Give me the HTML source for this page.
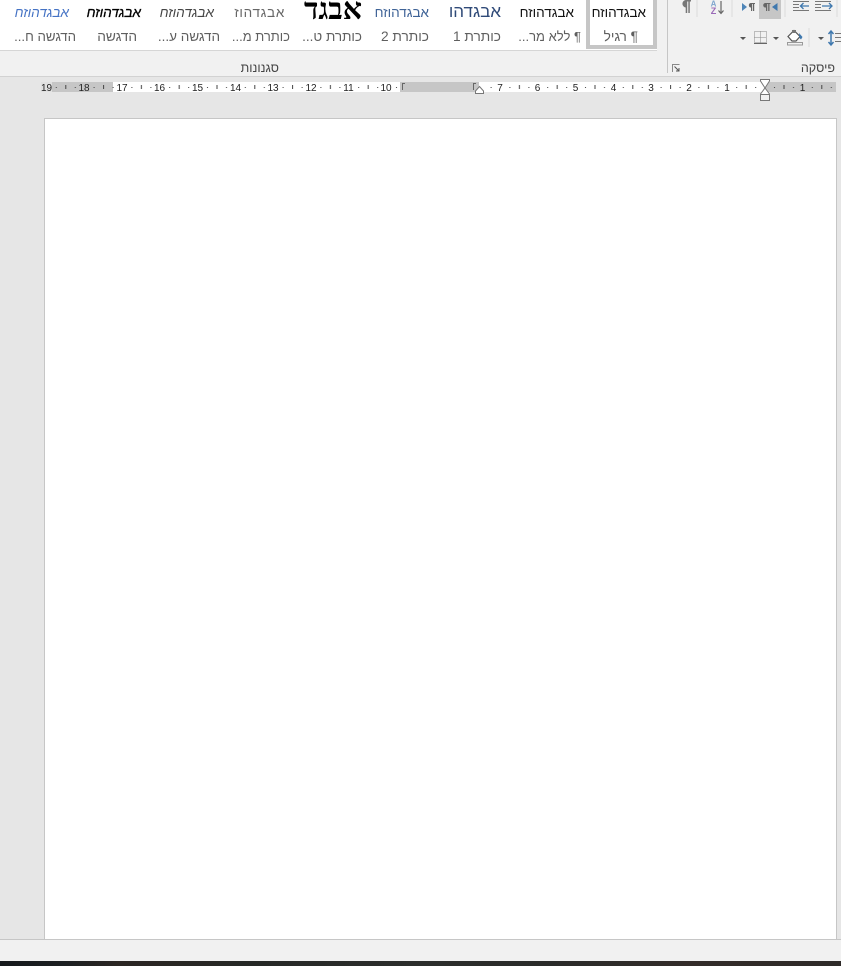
<!DOCTYPE html>
<html lang="he">
<head>
<meta charset="utf-8">
<title>Word</title>
<style>
html,body{margin:0;padding:0;width:841px;height:966px;overflow:hidden;background:#e6e6e6;font-family:"Liberation Sans",sans-serif}
#a{position:absolute;left:0;top:0;width:841px;height:966px;overflow:hidden}
.b{position:absolute}
.s,.l{position:absolute;white-space:nowrap;direction:rtl;line-height:18px}
.s{top:4px;font-size:13.5px;color:#111}
.l{top:28px;font-size:13.5px;color:#5f5f5f}
.w{font-size:13.7px}
svg{position:absolute;overflow:visible}
</style>
</head>
<body>
<div id="a">
<div class="b" style="left:0;top:0;width:841px;height:77px;background:#f1f1f1"></div>
<div class="b" style="left:0;top:0;width:657px;height:50px;background:#fff"></div>
<div class="b" style="left:0;top:50px;width:657px;height:1px;background:#d6d6d6"></div>
<div class="b" style="left:0;top:76px;width:841px;height:1px;background:#d2d2d2"></div>
<div class="b" style="left:667px;top:0;width:1px;height:73px;background:#c6c6c6"></div>
<div class="b" style="left:586px;top:-4px;width:63px;height:45px;border:4px solid #c6c6c6;background:#fff"></div>

<span class="s" style="right:195px">אבגדהוזח</span>
<span class="l w" style="right:203px">¶ רגיל</span>
<span class="s" style="right:267px">אבגדהוזח</span>
<span class="l" style="right:260px;font-size:13px">¶ ללא מר...</span>
<span class="s" style="right:340px;top:3px;font-size:17px;color:#2f4a78">אבגדהו</span>
<span class="l w" style="right:340px">כותרת 1</span>
<span class="s" style="right:412px;font-size:13.5px;color:#3f6397">אבגדהוזח</span>
<span class="l w" style="right:412px">כותרת 2</span>
<span class="s" style="right:479px;top:-8px;font-family:'Liberation Serif',serif;font-size:30px;font-weight:bold;line-height:36px;color:#000">אבגד</span>
<span class="l" style="right:479px">כותרת ט...</span>
<span class="s" style="right:556px;letter-spacing:.7px;color:#666">אבגדהוז</span>
<span class="l" style="right:551px;font-size:13px">כותרת מ...</span>
<span class="s" style="right:627px;font-style:italic;color:#444">אבגדהוזח</span>
<span class="l" style="right:621px">הדגשה ע...</span>
<span class="s" style="right:700px;font-style:italic;color:#000;-webkit-text-stroke:.3px #000">אבגדהוזח</span>
<span class="l w" style="right:704px">הדגשה</span>
<span class="s" style="right:772px;font-style:italic;color:#4472c4">אבגדהוזח</span>
<span class="l" style="right:765px;font-size:13.25px">הדגשה ח...</span>

<span class="l" style="right:562px;top:59px;font-size:12.5px;color:#444">סגנונות</span>
<span class="l" style="right:6px;top:59px;font-size:12.5px;color:#444">פיסקה</span>

<div class="b" style="left:759px;top:0;width:22px;height:19px;background:#c6c6c6"></div>

<svg style="left:0;top:0" width="841" height="80" viewBox="0 0 841 80" fill="none">
<!-- pilcrow -->
<path d="M685.500 0H691V1.500H689.800V13H688.300V1.500H687.200V13H685.700V7.500A3.800 3.800 0 0 1 685.500 0z" fill="#777"/>
<line x1="697" y1="0" x2="697" y2="17" stroke="#dcdcdc"/>
<!-- sort -->
<text x="713.500" y="6.500" font-family="Liberation Sans" font-size="8" font-weight="bold" fill="#7fa6cf" text-anchor="middle">A</text>
<text x="713.500" y="14" font-family="Liberation Sans" font-size="9" font-weight="bold" fill="#9a6ab8" text-anchor="middle">Z</text>
<path d="M721 1V13M718.500 10.500L721 13.500L723.500 10.500" stroke="#666" stroke-width="1.200"/>
<line x1="732" y1="0" x2="732" y2="17" stroke="#dcdcdc"/>
<!-- ltr -->
<path d="M742 3L747 7L742 11z" fill="#4f86b8"/>
<path d="M750.500 3H755V4H754.200V11H753V4H752.200V11H751V7.500A2.300 2.300 0 0 1 750.500 3z" fill="#666"/>
<!-- rtl -->
<path d="M765 3H770.500V4H769.500V11H768.200V4H767.200V11H766V7.500A2.300 2.300 0 0 1 765 3z" fill="#666"/>
<path d="M777.500 3L772 7L777.500 11z" fill="#3f78ae"/>
<line x1="785" y1="0" x2="785" y2="17" stroke="#dcdcdc"/>
<!-- indents -->
<path d="M793 1.500H809M793 4.500H799M793 7.500H799M793 10.500H809" stroke="#777"/>
<path d="M800 6H809M803.500 3L800.500 6L803.500 9" stroke="#3f78ae" stroke-width="1.300"/>
<path d="M815 1.500H831M815 4.500H821M815 7.500H821M815 10.500H831" stroke="#777"/>
<path d="M822 6H832M829 3L832 6L829 9" stroke="#3f78ae" stroke-width="1.300"/>
<line x1="837" y1="0" x2="837" y2="17" stroke="#dcdcdc"/>
<!-- row 2 -->
<path d="M740 37H746L743 40z" fill="#555"/>
<path d="M754.500 31.500H766.500V42.500H754.500ZM760.500 31.500V42.500M754.500 37.500H766.500" stroke="#888" stroke-dasharray="1 1"/>
<path d="M754 43.500H767" stroke="#666"/>
<path d="M773 37H779L776 40z" fill="#555"/>
<path d="M788 36.500L794 30.500L800 36.500L796 41H792z" fill="#fff" stroke="#555" stroke-width="1.200"/>
<path d="M792 30H796V33H792z" fill="#777"/>
<path d="M799 33L802.500 37L801 39.500L799.500 38z" fill="#3f78ae"/>
<rect x="787.500" y="42.500" width="15" height="2.500" fill="#f1f1f1" stroke="#999"/>
<line x1="809" y1="28" x2="809" y2="47" stroke="#dcdcdc"/>
<path d="M818 37H824L821 40z" fill="#555"/>
<path d="M831 32V44M828.500 34L831 31L833.500 34M828.500 42L831 45L833.500 42" stroke="#3f78ae" stroke-width="1.500"/>
<path d="M835 33.500H841M835 37.500H841M835 41.500H841" stroke="#777"/>
<!-- launcher -->
<path d="M672.500 72V64.500H679.500" stroke="#888"/>
<path d="M674.500 66.500L679 71M679 68V71H676" stroke="#555"/>
</svg>

<!-- ruler -->
<svg style="left:0;top:76px" width="841" height="30" viewBox="0 76 841 30" fill="none">
<defs>
<pattern id="t" x="765" y="82" width="37.8" height="10" patternUnits="userSpaceOnUse">
<rect x="9" y="5" width="1" height="1" fill="#444"/>
<rect x="28" y="5" width="1" height="1" fill="#444"/>
<rect x="18.500" y="3" width="1" height="4" fill="#444"/>
</pattern>
</defs>
<rect x="41" y="82" width="72" height="10" fill="#c6c6c6"/>
<rect x="41" y="82" width="11" height="10" fill="#e0e0e0"/>
<rect x="113" y="82" width="287" height="10" fill="#fff"/>
<rect x="400" y="82" width="79" height="10" fill="#c6c6c6"/>
<rect x="479" y="82" width="286" height="10" fill="#fff"/>
<rect x="765" y="82" width="71" height="10" fill="#c6c6c6"/>
<rect x="52" y="82" width="348" height="10" fill="url(#t)"/>
<rect x="484" y="82" width="352" height="10" fill="url(#t)"/>
<g font-family="Liberation Sans" font-size="10" fill="#222" text-anchor="middle">
<text x="46.500" y="91">19</text><text x="84" y="91">18</text><text x="122" y="91">17</text><text x="159.500" y="91">16</text><text x="197.500" y="91">15</text><text x="235.500" y="91">14</text><text x="273" y="91">13</text><text x="311" y="91">12</text><text x="348.500" y="91">11</text><text x="386" y="91">10</text><text x="500" y="91">7</text><text x="537.500" y="91">6</text><text x="575.500" y="91">5</text><text x="613.500" y="91">4</text><text x="651" y="91">3</text><text x="689" y="91">2</text><text x="727" y="91">1</text><text x="802.500" y="91">1</text>
</g>
<path d="M405 83.500H402.500V90M476 83.500H473.500V90" stroke="#666"/>
<path d="M475.500 93.500V91L479.500 86.500L483.500 91V93.500z" fill="#fff" stroke="#777"/>
<path d="M760.500 79.500H769.500V81L765 88L760.500 81z" fill="#fff" stroke="#777"/>
<path d="M765 88L769.500 94V94.500H760.500V94z" fill="#fff" stroke="#777"/>
<rect x="760.500" y="94.500" width="9" height="6" fill="#f1f1f1" stroke="#777"/>
</svg>

<!-- page -->
<div class="b" style="left:44px;top:118px;width:791px;height:821px;background:#fff;border:1px solid #c6c6c6;border-bottom:0"></div>

<!-- status -->
<div class="b" style="left:0;top:939px;width:841px;height:1px;background:#c6c6c6"></div>
<div class="b" style="left:0;top:940px;width:841px;height:21px;background:#f1f1f1"></div>
<div class="b" style="left:0;top:961px;width:841px;height:5px;background:linear-gradient(90deg,#15191c 0,#1d2022 8%,#2b2623 14%,#262826 30%,#2c2e2c 50%,#2a2b29 65%,#332c29 82%,#2e2a28 100%)"></div>
</div>
</body>
</html>
